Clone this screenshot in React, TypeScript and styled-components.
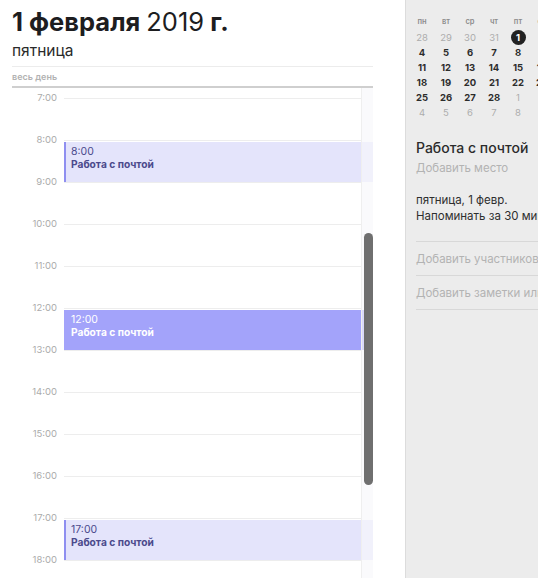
import React, { FC } from "react";
import styled, { createGlobalStyle } from "styled-components";

const GlobalStyle = createGlobalStyle`
  html, body {
    margin: 0;
    padding: 0;
    background: #ffffff;
    font-family: Inter, "Noto Sans", "Liberation Sans", sans-serif;
    -webkit-font-smoothing: antialiased;
  }
  * { box-sizing: border-box; }
`;

const HOUR_H = 42;
const FIRST_HOUR = 7;

const Screen = styled.div`
  width: 538px;
  height: 578px;
  display: flex;
  overflow: hidden;
`;

const DayPane = styled.div`
  width: 405px;
  flex: none;
  display: flex;
  flex-direction: column;
  padding-left: 12px;
  padding-right: 32px;
  background: #fff;
`;

const Title = styled.h1`
  margin: 7px 0 0;
  font-size: 25.5px;
  line-height: 30px;
  font-weight: 700;
  color: #1d1d1f;
  letter-spacing: 0;
  & span {
    font-weight: 400;
  }
`;

const Weekday = styled.div`
  margin-top: 5px;
  font-size: 15.5px;
  line-height: 18px;
  color: #2a2a2a;
  padding-bottom: 6px;
  border-bottom: 1px solid #ececec;
`;

const AllDay = styled.div`
  font-size: 9px;
  font-weight: 600;
  color: #b2b2b2;
  line-height: 10px;
  padding: 5px 0 4px;
  border-bottom: 2px solid #cfcfcf;
`;

const Timeline = styled.div`
  position: relative;
  flex: 1;
  overflow: hidden;
  padding-top: 10px;
`;

const HourRow = styled.div`
  display: flex;
  height: ${HOUR_H}px;
`;

const HourLabel = styled.div`
  width: 52px;
  flex: none;
  padding-right: 7px;
  text-align: right;
  font-size: 9.5px;
  line-height: 10px;
  margin-top: -5px;
  color: #ababab;
`;

const HourLine = styled.div`
  flex: 1;
  margin-right: 12px;
  border-top: 1px solid #ededed;
`;

const EventBlock = styled.div<{ $active?: boolean }>`
  position: absolute;
  left: 52px;
  right: 0;
  height: 40px;
  padding: 3px 0 0 5px;
  background: ${(p) => (p.$active ? "#a3a3fa" : "#e4e4fb")};
  border-left: 2px solid ${(p) => (p.$active ? "#a3a3fa" : "#8f8ff0")};
  color: ${(p) => (p.$active ? "#ffffff" : "#4b4a8c")};
`;

const EventTime = styled.div`
  font-size: 10.5px;
  line-height: 13px;
`;

const EventName = styled.div`
  font-size: 10.2px;
  line-height: 13px;
  font-weight: 700;
`;

const Track = styled.div`
  position: absolute;
  top: 0;
  right: 0;
  bottom: 0;
  width: 12px;
  background: rgba(248, 248, 250, 0.65);
  border-left: 1px solid #efefef;
`;

const Thumb = styled.div`
  position: absolute;
  left: 2px;
  width: 9px;
  border-radius: 5px;
  background: #6f6f6f;
`;

const SidePane = styled.div`
  flex: 1;
  min-width: 0;
  background: #ececec;
  border-left: 1px solid #dcdcdc;
  overflow: hidden;
  white-space: nowrap;
`;

const MiniMonth = styled.div`
  display: grid;
  grid-template-columns: repeat(7, 24px);
  grid-auto-rows: 15px;
  padding: 15px 0 0 4px;
`;

const DayHead = styled.div`
  font-size: 7.5px;
  font-weight: 600;
  color: #8c8c8c;
  text-align: center;
  line-height: 13px;
  height: 13px;
`;

const DayCell = styled.div<{ $muted?: boolean; $today?: boolean }>`
  display: flex;
  align-items: center;
  justify-content: center;
  font-size: 9.5px;
  font-weight: ${(p) => (p.$muted ? 400 : 700)};
  color: ${(p) => (p.$today ? "#fff" : p.$muted ? "#acacac" : "#2c2c2c")};
  & span {
    display: flex;
    align-items: center;
    justify-content: center;
    width: 15px;
    height: 15px;
    border-radius: 50%;
    background: ${(p) => (p.$today ? "#222" : "transparent")};
  }
`;

const Details = styled.div`
  padding: 19px 0 0 10px;
`;

const DetailTitle = styled.div`
  font-size: 14px;
  line-height: 17px;
  font-weight: 500;
  color: #2b2b2b;
`;

const Hint = styled.div`
  margin-top: 5px;
  font-size: 11.5px;
  line-height: 14px;
  color: #b3b3b3;
`;

const Info = styled.div`
  margin-top: 17px;
  font-size: 11.5px;
  line-height: 16px;
  color: #2e2e2e;
  padding-bottom: 17px;
  border-bottom: 1px solid #d8d8d8;
`;

const Field = styled.div`
  font-size: 11.5px;
  color: #b3b3b3;
  padding: 9.5px 0;
  line-height: 14px;
  border-bottom: 1px solid #d8d8d8;
`;

const hours = [7, 8, 9, 10, 11, 12, 13, 14, 15, 16, 17, 18];
const events = [
  { hour: 8, active: false },
  { hour: 12, active: true },
  { hour: 17, active: false },
];

const heads = ["пн", "вт", "ср", "чт", "пт", "сб", "вс"];
const weeks: { d: number; m?: boolean }[][] = [
  [{ d: 28, m: true }, { d: 29, m: true }, { d: 30, m: true }, { d: 31, m: true }, { d: 1 }, { d: 2 }, { d: 3 }],
  [{ d: 4 }, { d: 5 }, { d: 6 }, { d: 7 }, { d: 8 }, { d: 9 }, { d: 10 }],
  [{ d: 11 }, { d: 12 }, { d: 13 }, { d: 14 }, { d: 15 }, { d: 16 }, { d: 17 }],
  [{ d: 18 }, { d: 19 }, { d: 20 }, { d: 21 }, { d: 22 }, { d: 23 }, { d: 24 }],
  [{ d: 25 }, { d: 26 }, { d: 27 }, { d: 28 }, { d: 1, m: true }, { d: 2, m: true }, { d: 3, m: true }],
  [{ d: 4, m: true }, { d: 5, m: true }, { d: 6, m: true }, { d: 7, m: true }, { d: 8, m: true }, { d: 9, m: true }, { d: 10, m: true }],
];

const App: FC = () => {
  return (
    <React.Fragment>
      <GlobalStyle />
      <Screen>
        <DayPane>
          <Title>
            1 февраля <span>2019</span> г.
          </Title>
          <Weekday>пятница</Weekday>
          <AllDay>весь день</AllDay>
          <Timeline>
            {hours.map((h) => (
              <HourRow key={h}>
                <HourLabel>{h}:00</HourLabel>
                <HourLine />
              </HourRow>
            ))}
            {events.map((e) => (
              <EventBlock
                key={e.hour}
                $active={e.active}
                style={{ top: 10 + (e.hour - FIRST_HOUR) * HOUR_H + 2 }}
              >
                <EventTime>{e.hour}:00</EventTime>
                <EventName>Работа с почтой</EventName>
              </EventBlock>
            ))}
            <Track>
              <Thumb style={{ top: 145, height: 252 }} />
            </Track>
          </Timeline>
        </DayPane>

        <SidePane>
          <MiniMonth>
            {heads.map((h) => (
              <DayHead key={h}>{h}</DayHead>
            ))}
            {weeks.flat().map((c, i) => (
              <DayCell key={i} $muted={c.m} $today={i === 4}>
                <span>{c.d}</span>
              </DayCell>
            ))}
          </MiniMonth>
          <Details>
            <DetailTitle>Работа с почтой</DetailTitle>
            <Hint>Добавить место</Hint>
            <Info>
              <div>пятница, 1 февр.</div>
              <div>Напоминать за 30 минут</div>
            </Info>
            <Field>Добавить участников</Field>
            <Field>Добавить заметки или URL</Field>
          </Details>
        </SidePane>
      </Screen>
    </React.Fragment>
  );
};

export default App;
